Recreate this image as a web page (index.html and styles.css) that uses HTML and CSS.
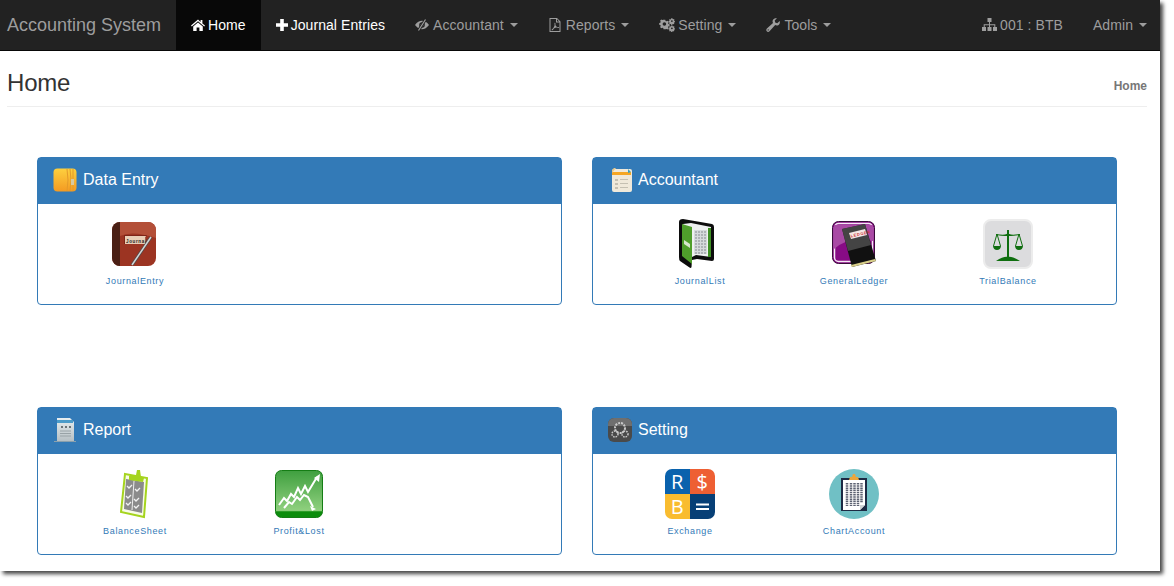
FILE: index.html
```html
<!DOCTYPE html>
<html lang="en">
<head>
  <meta charset="UTF-8">
  <title>Accounting System</title>
  <link rel="stylesheet" href="styles.css">
</head>
<body>
  <div class="window">
    <nav class="navbar">
      <a class="brand">Accounting System</a>
      <a class="nav-item active"><svg class="nav-icon" viewBox="0 0 14 14"><path d="M7 1.500 0 7.600l.8.9L7 3.200l6.200 5.300.8-.9-2.600-2.200V2h-1.800v1.900zM2.200 8.600V13h3.400V9.600h2.800V13h3.400V8.600L7 4.500z"/></svg>Home</a>
      <a class="nav-item strong"><svg class="nav-icon plus" viewBox="0 0 12 12"><path d="M4.200 0h3.600v4.200H12v3.600H7.800V12H4.200V7.800H0V4.200h4.200z"/></svg>Journal Entries</a>
      <a class="nav-item"><svg class="nav-icon" viewBox="0 0 14 14"><path fill-rule="evenodd" d="M0 7Q3.200 2.800 7 2.800T14 7Q10.800 11.200 7 11.200T0 7zM7 4.200a2.800 2.800 0 1 0 0 5.600 2.800 2.800 0 0 0 0-5.600z"/><circle cx="7" cy="7" r="1.500"/><path d="M3.500 12.500 10.500 1.500" stroke="#222" stroke-width="3"/><path d="M3.500 12.500 10.500 1.500" stroke="currentColor" stroke-width="1.200"/></svg>Accountant<span class="caret"></span></a>
      <a class="nav-item"><svg class="nav-icon" viewBox="0 0 13 14"><path fill-rule="evenodd" d="M1 0h7.500L12 3.500V14H1zm1 1v12h9V4.500H7.500V1zm6.500.3v2.200h2.200zM3.200 11.600c1.400-.8 2.400-2.400 3-4.500-.3-1-.3-2 .1-2.300.5-.2.800.5.600 2.200.4 1 1 1.700 1.800 2 .9-.1 1.900 0 2 .5 0 .6-1.200.6-2.300.1-1 .1-2.100.4-3 .8-.8 1.400-1.600 2.200-2.200 1.800z"/></svg>Reports<span class="caret"></span></a>
      <a class="nav-item"><svg class="nav-icon cogs" viewBox="0 0 16 14"><path fill-rule="evenodd" d="M5 2.500h2l.3 1.300 1 .5 1.200-.6 1.300 1.400-.7 1.100.4 1 1.300.3v2l-1.300.3-.4 1 .7 1.100-1.300 1.400-1.200-.6-1 .4L7 13H5l-.3-1.300-1-.4-1.200.6L1.200 10.500l.7-1.100-.4-1L.2 8.100v-2l1.300-.3.4-1-.7-1.100 1.300-1.400 1.200.6 1-.5zM6 5.300a2 2 0 1 0 0 4 2 2 0 0 0 0-4z" transform="translate(0 -.5) scale(.9)"/><path fill-rule="evenodd" d="M12.500 0l1 .2.100.8.600.3.700-.4.600.8-.4.600.2.700.7.200v1l-.7.100-.3.700.4.600-.7.700-.7-.4-.6.300-.2.700h-1l-.1-.7-.7-.3-.6.400-.7-.7.4-.6-.3-.7-.7-.1v-1l.7-.2.300-.7-.4-.6.700-.7.600.400.700-.3zm.4 2.200a.9.900 0 1 0 0 1.800.9.900 0 0 0 0-1.800z"/><path fill-rule="evenodd" d="M12.500 8l1 .2.100.8.600.3.700-.4.600.8-.4.600.2.700.7.200v1l-.7.100-.3.700.4.600-.7.700-.7-.4-.6.300-.2.700h-1l-.1-.7-.7-.3-.6.400-.7-.7.4-.6-.3-.7-.7-.1v-1l.7-.2.300-.7-.4-.6.700-.7.600.400.700-.3zm.4 2.200a.9.900 0 1 0 0 1.800.9.900 0 0 0 0-1.800z" transform="translate(0 -.8)"/></svg>Setting<span class="caret"></span></a>
      <a class="nav-item"><svg class="nav-icon" viewBox="0 0 14 14"><path fill-rule="evenodd" d="M13.700 3.100c.5 1.700-.1 3.400-1.500 4.100-1 .5-2 .5-3-.1L3.500 13.300c-.8.800-2 .8-2.700 0-.7-.7-.7-1.900.1-2.700l6.100-5.700c-.6-1-.6-2-.1-3C7.700.5 9.400-.1 11 .3L8.700 2.600l.5 2 2 .6zM2.200 11.300a.6.600 0 1 0 0 1.200.6.600 0 0 0 0-1.200z"/></svg>Tools<span class="caret"></span></a>
      <a class="nav-item right"><svg class="nav-icon sitemap" viewBox="0 0 15 14"><path d="M5.500 0h4v4H8v2.200h5.300V9H15v4h-4V9h1.300V7.200H8V9h1.500v4h-4V9H7V7.200H2.700V9H4v4H0V9h1.700V6.200H7V4H5.500z"/></svg>001 : BTB</a>
      <a class="nav-item admin">Admin<span class="caret"></span></a>
    </nav>

    <div class="content">
      <div class="page-header">
        <h1>Home</h1>
        <span class="crumb">Home</span>
      </div>

      <div class="panels">
        <section class="panel">
          <h2 class="panel-title">
            <svg class="title-icon" viewBox="0 0 24 24">
              <defs><linearGradient id="zipGrad" x1="0" y1="0" x2="0" y2="1"><stop offset="0" stop-color="#fdd03f"/><stop offset="1" stop-color="#f49a22"/></linearGradient></defs>
              <rect x="0.500" y="0.500" width="23" height="23" rx="4" fill="url(#zipGrad)"/>
              <path d="M14 1Q16 12 14 23M17 1Q19 12 17 23M20 1V23" stroke="#e39a2a" stroke-width="1" fill="none"/>
              <rect x="18" y="11" width="3" height="6" fill="#d8c9a0"/>
            </svg>
            Data Entry
          </h2>
          <div class="panel-body wide">
            <a class="shortcut">
              <div class="shortcut-img shift-journal">
                <svg width="44" height="44" viewBox="0 0 44 44">
                  <rect width="44" height="44" rx="8" fill="#9c3422"/>
                  <path d="M8 0h28a8 8 0 0 1 8 8v8Q20 8 8 14z" fill="#b34f38"/>
                  <path d="M8 0v44a8 8 0 0 1-8-8V8a8 8 0 0 1 8-8z" fill="#4a2015"/>
                  <path d="M12 13h23l-2 3 1 2-1 2 1 2H12z" fill="#7d2418"/>
                  <path d="M13 14h21l-1 2 1 2-1 2 1 2H13z" fill="#e9cdb5"/>
                  <text x="14" y="20.500" class="mini-label">Journal</text>
                  <path d="M20 43 39 15" stroke="#4b4b4b" stroke-width="3"/>
                  <path d="M20 43 39 15" stroke="#d6d6d6" stroke-width="1.500"/>
                </svg>
              </div>
              <span>JournalEntry</span>
            </a>
          </div>
        </section>

        <section class="panel">
          <h2 class="panel-title">
            <svg class="title-icon" viewBox="0 0 24 24">
              <rect x="4" y="1" width="20" height="23" rx="2" fill="#f0e9da"/>
              <rect x="4" y="4" width="19" height="3" fill="#f5a623"/>
              <path d="M4 5 8 0H6L4 2z" fill="#e9c98b"/>
              <path d="M20 1l3 3-3 1z" fill="#3a9fc0"/>
              <path d="M7 11h3v2H7zM7 15h3v2H7zM7 19h3v2H7zM12 11h8v1h-8zM12 15h8v1h-8zM12 19h8v1h-8z" fill="#c5c0b2"/>
            </svg>
            Accountant
          </h2>
          <div class="panel-body narrow">
            <a class="shortcut">
              <div class="shortcut-img shift-list">
                <svg width="36" height="50" viewBox="0 0 36 50">
                  <path d="M4 0 33 5q2 .5 2 3V40q0 2-2 2l-15-2-5 1-.5 7q-.5 1.500-2 .5L1 42Q0 41 0 38V3Q0 0 4 0z" fill="#0c0c0c"/>
                  <path d="M4 5 12 4 32 8V38L17 36 13 38z" fill="#eef0f0"/>
                  <path d="M3 5 13 8V45L3 37z" fill="#4f9e2b"/>
                  <path d="M29 9h3V38h-3z" fill="#3e8f24"/>
                  <path d="M15 11h13v24H15z" fill="#d6dadc"/>
                  <path d="M16 13h11M16 16h11M16 19h11M16 22h11M16 25h11M16 28h11M16 31h11M16 34h11" stroke="#868b90" stroke-width="1" stroke-dasharray="2 1"/>
                  <path d="M5 21 11 25v4L5 25z" fill="#d7e6cc"/>
                </svg>
              </div>
              <span>JournalList</span>
            </a>
            <a class="shortcut">
              <div class="shortcut-img">
                <svg width="44" height="46" viewBox="0 0 44 46">
                  <rect x="0.500" y="0.500" width="42" height="42" rx="6" fill="#870b85" stroke="#3a0a3a"/>
                  <rect x="2.500" y="2.500" width="38" height="38" rx="4" fill="none" stroke="#f5e9f5" stroke-width="1.500"/>
                  <path d="M2 4H41V20Q18 14 2 28z" fill="#a94aa5"/>
                  <path d="M10 8 33 3 44 40 20 46z" fill="#111"/>
                  <path d="M10 8 33 3 39 24 16 30z" fill="#5a5a5a" opacity=".7"/>
                  <path d="M17 12 33 8 35 14 19 18z" fill="#f3e6e6"/>
                  <path d="M19 44 43 38 44 40 20 46z" fill="#d9cf8a"/>
                  <text x="19" y="16.500" class="mini-label ledger" transform="rotate(-13 19 16.500)">LEDGER</text>
                </svg>
              </div>
              <span>GeneralLedger</span>
            </a>
            <a class="shortcut">
              <div class="shortcut-img">
                <svg width="50" height="50" viewBox="0 0 50 50">
                  <rect x="1" y="1" width="48" height="48" rx="7" fill="#dcdcde" stroke="#ececec" stroke-width="2"/>
                  <path d="M24 11h2V39h-2zM13 15q12 2 12-2 0 4 12 2v1q-12 2-12 0 0 2-12 0z" fill="#0f6e0f"/>
                  <path d="M14 15 10.500 27M14 15 17.500 27M36 15 32.500 27M36 15 39.500 27" stroke="#0f6e0f" stroke-width="1" fill="none"/>
                  <path d="M10 27h8q-.5 4-4 4t-4-4zM32 27h8q-.5 4-4 4t-4-4z" fill="#0f6e0f"/>
                  <path d="M13 42q8-5 12-4 4-1 12 4z" fill="#0f6e0f"/>
                </svg>
              </div>
              <span>TrialBalance</span>
            </a>
          </div>
        </section>

        <section class="panel">
          <h2 class="panel-title">
            <svg class="title-icon" viewBox="0 0 24 24">
              <defs><linearGradient id="repGrad" x1="0" y1="0" x2="0" y2="1"><stop offset="0" stop-color="#e8eef0"/><stop offset="1" stop-color="#b7c0c4"/></linearGradient></defs>
              <path d="M4 0h13l4 4v19H4z" fill="url(#repGrad)"/>
              <rect x="4" y="2" width="16" height="3" fill="#4b9bc9"/>
              <path d="M8 8h2v2H8zM12 8h2v2h-2zM16 8h2v2h-2z" fill="#6b7478"/>
              <path d="M7 13h11M7 15.500h11M7 18h11" stroke="#98a2a6" stroke-width="1"/>
              <path d="M1 23h22v1H1z" fill="#8aa0ad"/>
            </svg>
            Report
          </h2>
          <div class="panel-body wide">
            <a class="shortcut">
              <div class="shortcut-img">
                <svg width="30" height="50" viewBox="0 0 30 50">
                  <path d="M5 5 27 9 24 48 1 43z" fill="#f8fbe8" stroke="#a5d41e" stroke-width="2"/>
                  <path d="M6 10 24 13 22 44 4 40z" fill="#8b8b8b"/>
                  <path d="M9 7 16 6 17 1h3l1 7 3 1-1 4L9 11z" fill="#a5d41e"/>
                  <path d="M14 12 12 41" stroke="#efefef" stroke-width="1"/>
                  <path d="M7 17l2 2 3-3M15 20l2 2 3-3M6 27l2 2 3-3M14 30l2 2 3-3M6 34l2 2 3-3M14 37l2 2 3-3" stroke="#f2f2f2" stroke-width="1.300" fill="none"/>
                </svg>
              </div>
              <span>BalanceSheet</span>
            </a>
            <a class="shortcut">
              <div class="shortcut-img">
                <svg width="48" height="48" viewBox="0 0 48 48">
                  <defs><linearGradient id="profitGrad" x1="0" y1="0" x2="0" y2="1"><stop offset="0" stop-color="#3f9f3f"/><stop offset=".85" stop-color="#8fd07e"/><stop offset=".88" stop-color="#0c8c0c"/></linearGradient></defs>
                  <rect x="0.500" y="0.500" width="47" height="47" rx="6" fill="url(#profitGrad)" stroke="#157d15"/>
                  <path d="M4 35 9 28 12 31 16 24 19 27 23 18 26 24 30 16 33 22 36 17 42 7" stroke="#fff" stroke-width="2" fill="none"/>
                  <path d="M9 38 14 32 17 34 22 27 25 30 29 25 33 27 38 37" stroke="#fff" stroke-width="2" fill="none"/>
                  <path d="M39 8 45 4 44 12zM35 36 41 39 37 41z" fill="#fff"/>
                </svg>
              </div>
              <span>Profit&amp;Lost</span>
            </a>
          </div>
        </section>

        <section class="panel">
          <h2 class="panel-title">
            <svg class="title-icon" viewBox="0 0 24 24">
              <rect width="24" height="24" rx="6" fill="#4a4a4a"/>
              <path d="M0 6a6 6 0 0 1 6-6h12a6 6 0 0 1 6 6v2H0z" fill="#6f6f6f"/>
              <circle cx="12" cy="10" r="5" fill="none" stroke="#c9c9c9" stroke-width="2" stroke-dasharray="2 1"/>
              <circle cx="7" cy="16" r="3" fill="none" stroke="#c9c9c9" stroke-width="1.500" stroke-dasharray="1.500 1"/>
              <circle cx="17" cy="16" r="3" fill="none" stroke="#c9c9c9" stroke-width="1.500" stroke-dasharray="1.500 1"/>
            </svg>
            Setting
          </h2>
          <div class="panel-body wide">
            <a class="shortcut">
              <div class="shortcut-img">
                <svg width="50" height="50" viewBox="0 0 50 50">
                  <clipPath id="rsbClip"><rect width="50" height="50" rx="7"/></clipPath>
                  <g clip-path="url(#rsbClip)">
                    <rect width="25" height="25" fill="#0a62ad"/>
                    <rect x="25" width="25" height="25" fill="#ee5f33"/>
                    <rect y="25" width="25" height="25" fill="#f9bc2f"/>
                    <rect x="25" y="25" width="25" height="25" fill="#073f76"/>
                  </g>
                  <text x="12.500" y="19.500" class="tile">R</text>
                  <text x="37.500" y="20" class="tile">$</text>
                  <text x="12.500" y="44.500" class="tile">B</text>
                  <path d="M31 34.500h13v2H31zM31 39h13v2H31z" fill="#fff"/>
                </svg>
              </div>
              <span>Exchange</span>
            </a>
            <a class="shortcut">
              <div class="shortcut-img">
                <svg width="50" height="50" viewBox="0 0 50 50">
                  <circle cx="25" cy="25" r="25" fill="#70c0c5"/>
                  <rect x="12" y="9" width="26" height="33" fill="#1d2a44"/>
                  <path d="M14 11h22v25l-5 5H14z" fill="#fff"/>
                  <path d="M31 41l5-5h-5z" fill="#cfd3d6"/>
                  <path d="M21 8h2l1-3h2l1 3h2l1 3H20z" fill="#eba63a"/>
                  <path d="M18 14v23M22 14v23M25.500 14v23M29 14v23M32.500 14v20" stroke="#5c6272" stroke-width="2.500" stroke-dasharray="1.500 .7"/>
                </svg>
              </div>
              <span>ChartAccount</span>
            </a>
          </div>
        </section>
      </div>
    </div>
  </div>
</body>
</html>
```

FILE: styles.css
```css
html,
body {
  height: 100%;
}
body {
  margin: 0;
  font-family: "Liberation Sans", Arial, sans-serif;
  background-color: #fff;
  color: #333;
}
.window {
  width: 1160px;
  height: 571px;
  background-color: #fff;
  box-shadow: 3px 3px 4px #444;
}
.navbar {
  display: flex;
  height: 50px;
  background-color: #222;
  border-bottom: 1px solid #080808;
}
.brand {
  width: 154px;
  padding: 15px 15px 0 7px;
  font-size: 18px;
  line-height: 20px;
  white-space: nowrap;
  color: #9d9d9d;
}
.nav-item {
  display: flex;
  align-items: center;
  padding: 0 15px;
  font-size: 14px;
  letter-spacing: 0.07px;
  color: #9d9d9d;
}
.nav-item.active {
  background-color: #080808;
  color: #fff;
}
.nav-item.strong {
  color: #fff;
}
.nav-item.right {
  margin-left: auto;
}
.nav-item.admin {
  padding-right: 13px;
}
.nav-icon {
  width: 14px;
  height: 14px;
  margin-right: 4px;
  fill: currentColor;
}
.nav-item.active .nav-icon,
.nav-item.strong .nav-icon {
  margin-right: 3px;
}
.nav-icon.plus {
  width: 12px;
  height: 12px;
}
.nav-icon.cogs {
  width: 16px;
  margin-right: 3px;
}
.nav-icon.sitemap {
  width: 15px;
  margin-right: 3px;
}
.caret {
  width: 0;
  height: 0;
  margin-left: 6px;
  border-top: 4px solid;
  border-left: 4px solid transparent;
  border-right: 4px solid transparent;
}
.content {
  padding: 0 13px 0 7px;
}
.page-header {
  display: flex;
  justify-content: space-between;
  height: 55px;
  border-bottom: 1px solid #eee;
}
.page-header h1 {
  margin: 18px 0 0;
  font-size: 24px;
  line-height: 28px;
  font-weight: normal;
  letter-spacing: -0.2px;
  color: #333;
}
.crumb {
  margin-top: 28px;
  font-size: 12px;
  line-height: 14px;
  font-weight: bold;
  color: #777;
}
.panels {
  display: grid;
  grid-template-columns: 525px 525px;
  grid-auto-rows: 148px;
  gap: 102px 30px;
  margin: 50px 30px 0;
}
.panel {
  border: 1px solid #337ab7;
  border-radius: 4px;
  background-color: #fff;
}
.panel-title {
  display: flex;
  align-items: center;
  gap: 6px;
  height: 44px;
  margin: 0;
  padding: 0 0 2px 15px;
  background-color: #337ab7;
  font-size: 16px;
  font-weight: normal;
  color: #fff;
}
.title-icon {
  width: 24px;
  height: 24px;
}
.panel-body {
  display: grid;
  padding-top: 15px;
}
.panel-body.wide {
  grid-template-columns: repeat(2, 164px);
  padding-left: 15px;
}
.panel-body.narrow {
  grid-template-columns: repeat(3, 154px);
  padding-left: 30px;
}
.shortcut {
  display: flex;
  flex-direction: column;
  align-items: center;
  font-size: 9px;
  letter-spacing: 0.65px;
  color: #337ab7;
}
.shortcut-img {
  display: flex;
  align-items: center;
  justify-content: center;
  height: 50px;
  margin-bottom: 7px;
}
.shift-journal {
  margin-right: 2px;
}
.shift-list {
  margin-right: 6px;
}
.mini-label {
  font-size: 4.5px;
  font-weight: bold;
  fill: #222;
}
.mini-label.ledger {
  font-size: 4px;
  fill: #c33;
}
.tile {
  font-family: "Open Sans", sans-serif;
  font-size: 20px;
  fill: #fff;
  text-anchor: middle;
}
```
